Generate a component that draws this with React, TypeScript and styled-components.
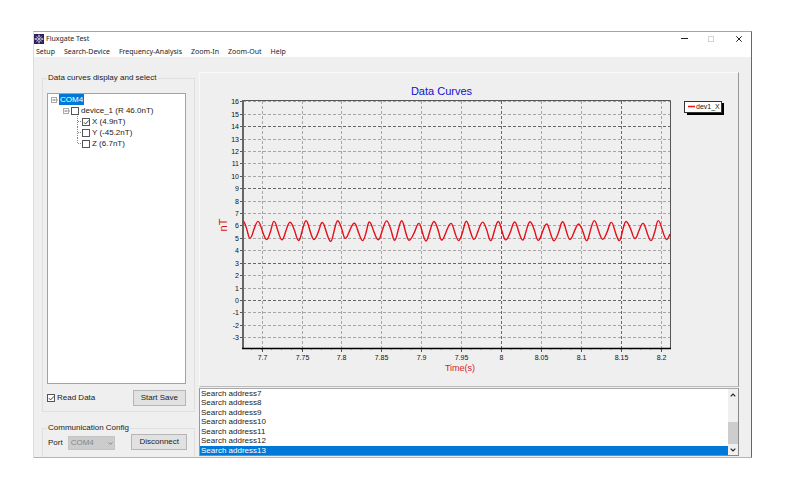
import React, { useState } from 'react';
import styled, { createGlobalStyle } from 'styled-components';

const sans = '"Liberation Sans", Arial, sans-serif';
const ui = '"Noto Sans", "Open Sans", sans-serif';

const GlobalStyle = createGlobalStyle`
  *, *::before, *::after { box-sizing: border-box; }
  body { margin: 0; background: #fff; color: #222; font: 8px/10px ${sans}; }
  button, input, select { font: inherit; color: inherit; margin: 0; }
`;

const AppWindow = styled.main`
  margin: 31px 48px 25px 33px;
  border: 1px solid;
  border-color: #a5a897 #666 #b4b4b4 #dcdcdc;
  background: #efefef;
`;

const TitleBar = styled.header`
  display: flex;
  align-items: center;
  gap: 2px;
  height: 14px;
  background: #fff;
`;

const Title = styled.h1`
  flex: 1;
  margin: 0;
  font: 400 7px/12px ${ui};
`;

const WindowButton = styled.button`
  display: grid;
  place-items: center;
  width: 25px;
  height: 14px;
  padding: 0;
  border: 0;
  background: none;
  color: #222;
  &:disabled { color: #d5d5cd; }
`;

const MenuBar = styled.nav`
  display: flex;
  gap: 9px;
  height: 11px;
  padding-left: 2px;
  background: #fff;
`;

const MenuItem = styled.button`
  padding: 0;
  border: 0;
  background: none;
  font: 7px/11px ${ui};
  white-space: nowrap;
`;

const Body = styled.div`
  display: grid;
  grid-template-columns: 153px minmax(0, 1fr);
  gap: 4px;
  padding: 15px 12px 0 8px;
`;

const Column = styled.div`
  display: flex;
  flex-direction: column;
  min-width: 0;
`;

const Group = styled.fieldset<{ $open?: boolean }>`
  min-width: 0;
  margin: ${p => (p.$open ? '11px 0 0' : '1px 0 0')};
  padding: ${p => (p.$open ? '0 7px 7px 4px' : '10px 8px 5px 4px')};
  border: 1px solid #dfdfdf;
  border-bottom-width: ${p => (p.$open ? 0 : '1px')};
`;

const Legend = styled.legend`
  padding: 0 1px;
  line-height: 10px;
  white-space: nowrap;
`;

const Tree = styled.ul`
  height: 291px;
  margin: 0 0 6px;
  padding: 0 0 0 3px;
  border: 1px solid #a2a2a2;
  background: #fff;
  list-style: none;
`;

const TreeRow = styled.li<{ $depth: number }>`
  display: flex;
  align-items: center;
  height: 11px;
  padding-left: ${p => [0, 12, 26][p.$depth]}px;
  white-space: nowrap;
`;

const NodeName = styled.span`
  height: 11px;
  padding: 0 1px;
  outline: 1px dotted #7a5a32;
  outline-offset: -1px;
  background: #0078d7;
  color: #fff;
  line-height: 11px;
`;

const CheckLabel = styled.label`
  display: flex;
  align-items: center;
  gap: 2px;
`;

const tick =
  "url(\"data:image/svg+xml,%3Csvg xmlns='http://www.w3.org/2000/svg' viewBox='0 0 8 8'%3E%3Cpath d='M1.5 4l1.8 1.8L6.8 2' fill='none' stroke='%23333'/%3E%3C/svg%3E\")";

const Check = styled.input.attrs({ type: 'checkbox' })`
  appearance: none;
  width: 8px;
  height: 8px;
  border: 1px solid #555;
  background: #fff;
  &:checked { background: #fff ${tick} center / 7px 7px no-repeat; }
`;

const Row = styled.div`
  display: flex;
  align-items: center;
  justify-content: space-between;
`;

const PushButton = styled.button`
  height: 16px;
  padding: 0 7px;
  border: 1px solid #b5b5b5;
  background: #e1e1e1;
  white-space: nowrap;
`;

const PortLabel = styled.label`
  display: flex;
  align-items: center;
  gap: 5px;
  padding: 3px 0 0 1px;
`;

const PortBox = styled.span`
  display: grid;
  align-items: center;
  color: #858585;
  > * { grid-area: 1 / 1; }
  > svg { justify-self: end; margin-right: 2px; }
`;

const PortSelect = styled.select`
  appearance: none;
  width: 47px;
  height: 14px;
  padding: 0 2px;
  border: 1px solid #c4c4c4;
  border-radius: 0;
  background: #cccccc;
  &:disabled { color: #858585; opacity: 1; }
`;

const ChartPanel = styled.section`
  border: 1px solid;
  border-color: #f8f8f8 #999 #bbb #f8f8f8;
`;

const Chart = styled.svg`
  display: block;
  width: 100%;
  height: auto;
  font-family: ${sans};
`;

const LogPanel = styled.section`
  display: flex;
  height: 68px;
  margin-top: 1px;
  border: 1px solid;
  border-color: #aaa #888 #888 #999;
  background: #fff;
`;

const LogList = styled.ul`
  display: flex;
  flex: 1;
  flex-direction: column;
  margin: 0;
  padding: 0;
  list-style: none;
`;

const LogItem = styled.li<{ $selected: boolean }>`
  flex: 1;
  padding-left: 1px;
  line-height: 9px;
  background: ${p => (p.$selected ? '#0078d7' : 'transparent')};
  color: ${p => (p.$selected ? '#fff' : '#222')};
`;

const ScrollTrack = styled.div`
  display: flex;
  flex-direction: column;
  width: 10px;
  background: #f0f0f0;
`;

const ScrollButton = styled.button`
  display: grid;
  place-items: center;
  height: 11px;
  padding: 0;
  border: 0;
  background: none;
`;

const ScrollThumb = styled.div`
  height: 22px;
  margin-top: auto;
  background: #cdcdcd;
`;

const Chevron = ({ up, size = 5 }: { up?: boolean; size?: number }) => (
  <svg width={size} height={size} viewBox="0 0 6 6" fill="none" stroke="currentColor" strokeWidth="1.2">
    <path d={up ? 'M.7 4.3L3 2l2.3 2.3' : 'M.7 1.7L3 4l2.3-2.3'} />
  </svg>
);

const AppIcon = () => (
  <svg width="10" height="10" viewBox="0 0 10 10">
    <rect width="10" height="10" fill="#2b2056" />
    <g fill="none" stroke="#d3cdf0">
      <circle cx="5" cy="5" r="2.3" strokeWidth=".9" />
      <path d="M5 .7v1.6M5 7.7v1.6M.7 5h1.6M7.7 5h1.6" strokeWidth="1.3" />
      <path d="M1.8 1.8l1 1M7.2 7.2l1 1M8.2 1.8l-1 1M2.8 7.2l-1 1" strokeWidth=".6" />
    </g>
    <circle cx="5" cy="5" r=".9" fill="#fff" />
  </svg>
);

const Expander = () => (
  <svg width="8" height="11" viewBox="0 0 8 11" fill="none" stroke="#888">
    <rect x=".5" y="3.5" width="5" height="5" stroke="#aaa" />
    <path d="M1.5 6h3" stroke="#444" strokeWidth=".8" />
    <path d="M6 6h2" strokeDasharray="1 1" />
  </svg>
);

const Branch = ({ last }: { last: boolean }) => (
  <svg width="5" height="11" viewBox="0 0 5 11" fill="none" stroke="#888" strokeDasharray="1 1">
    <path d={last ? 'M.5 0v6' : 'M.5 0v11'} />
    <path d="M1 5.5h4" />
  </svg>
);

const X0 = 243;
const X1 = 670;
const Y0 = 101;
const Y1 = 348;
const yAt = (v: number) => Math.round(300 - v * 12.42) + 0.5;
const xAt = (v: number) => Math.round(501 + (v - 8) * 798) + 0.5;
const yTicks = Array.from({ length: 20 }, (_, i) => 16 - i);
const xTicks = [7.7, 7.75, 7.8, 7.85, 7.9, 7.95, 8, 8.05, 8.1, 8.15, 8.2];
const minorTicks = Array.from({ length: 43 }, (_, i) => 251.5 + i * 9.98).filter(x => x < X1);

// Alternating troughs and crests of the measured field, in chart units.
const extrema: [number, number][] = [
  [250, 238.2], [258, 221.4], [266.7, 239.5], [274, 221.4], [282, 239.8], [290, 222.3], [298.7, 240.5],
  [306, 220.8], [314, 239.6], [322.3, 222.5], [330.7, 241.4], [337.7, 220.8], [345.3, 238.4], [354.3, 223.3],
  [362.7, 240.6], [369.3, 222], [378.3, 239.8], [386.7, 220.9], [394.7, 240.3], [401.7, 220.8], [409, 240.3],
  [419, 223.4], [426, 241], [434, 221.5], [441.7, 240], [451, 223.4], [458.7, 240.6], [466.3, 221.2],
  [474, 239.4], [482.7, 222.1], [490.7, 240.6], [498.3, 221.5], [505.7, 239.9], [514.7, 222], [522.7, 240],
  [530, 221.8], [538.3, 240.4], [546.7, 224], [554, 240.8], [562.7, 221.8], [570, 239.5], [578.7, 224],
  [586.7, 240.6], [594.3, 220.6], [602.7, 239.4], [611.3, 222.4], [619.3, 240.6], [626, 221.5], [635, 238.5],
  [643, 223.4], [651, 240.6], [658.3, 220.6], [666.7, 239.5],
];

const wave = extrema.reduce(
  (d, [x, y], i) => {
    const [px, py] = i ? extrema[i - 1] : [243, 221];
    const w = x - px;
    const m = (py + y) / 2;
    const mx = px + w * (i % 3 === 0 ? 0.56 : 0.48);
    return `${d} C${px + w * 0.2} ${py} ${mx - w * 0.17} ${m - (y - py) * 0.22} ${mx} ${m} S${x - w * 0.2} ${y} ${x} ${y}`;
  },
  'M243 221',
) + ' Q668 239 670 234';

const DataChart = () => (
  <Chart viewBox="200 73 538 313" role="img" aria-label="Data Curves">
    <text x="441.5" y="95" textAnchor="middle" fontSize="11" fill="#1010d0">Data Curves</text>
    <g strokeDasharray="3 2">
      {yTicks.map(v => (
        <path key={v} d={`M${X0} ${yAt(v)}H${X1}`} stroke={[14, 9, 3, 0].includes(v) ? '#666' : '#a6a6a6'} />
      ))}
      {xTicks.map(v => (
        <path key={v} d={`M${xAt(v)} ${Y0}V${Y1}`} stroke={v === 8 || v === 8.15 ? '#666' : '#a6a6a6'} />
      ))}
    </g>
    <g stroke="#555">
      {yTicks.map(v => <path key={v} d={`M240 ${yAt(v)}H${X0}`} />)}
      {xTicks.map(v => <path key={v} d={`M${xAt(v)} ${Y1}v4`} />)}
      {minorTicks.map(x => <path key={x} d={`M${x} ${Y1}v2`} stroke="#999" />)}
      <path d={`M${X0} 100.5H670.5V${Y1}`} fill="none" />
    </g>
    <path d={`M${X0} 100V349`} stroke="#666" strokeWidth="2" />
    <path d={`M242 348.5H671`} stroke="#000" strokeWidth="1.4" />
    <path d={wave} fill="none" stroke="#e60c18" strokeWidth="1.4" strokeLinejoin="round" />
    <g fontSize="7" fill="#111">
      {yTicks.map(v => <text key={v} x="239" y={yAt(v) + 2.5} textAnchor="end">{v}</text>)}
      {xTicks.map(v => <text key={v} x={xAt(v)} y="359.5" textAnchor="middle">{v}</text>)}
    </g>
    <text x="460" y="371" textAnchor="middle" fontSize="9" fill="#cf2430">Time(s)</text>
    <text transform="translate(227 225) rotate(-90)" textAnchor="middle" fontSize="11" fill="#d51522">nT</text>
    <rect x="687" y="103" width="37" height="12" fill="#000" />
    <rect x="684.5" y="101.5" width="37" height="11" fill="#fff" stroke="#333" />
    <path d="M688 106.5h7" stroke="#f01010" strokeWidth="1.5" />
    <text x="696" y="109" fontSize="7" fill="#222">dev1_X</text>
  </Chart>
);

const menus = ['Setup', 'Search-Device', 'Frequency-Analysis', 'Zoom-In', 'Zoom-Out', 'Help'];
const axes = [
  { label: 'X (4.9nT)', on: true },
  { label: 'Y (-45.2nT)', on: false },
  { label: 'Z (6.7nT)', on: false },
];
const addresses = [7, 8, 9, 10, 11, 12, 13];

export default function App() {
  const [selected, setSelected] = useState(13);
  return (
    <>
      <GlobalStyle />
      <AppWindow>
        <TitleBar>
          <AppIcon />
          <Title>Fluxgate Test</Title>
          <WindowButton aria-label="Minimize">
            <svg width="8" height="8" stroke="currentColor"><path d="M0 3.5h7" /></svg>
          </WindowButton>
          <WindowButton aria-label="Maximize" disabled>
            <svg width="7" height="7" stroke="currentColor" fill="none"><rect x=".5" y=".5" width="5" height="5" /></svg>
          </WindowButton>
          <WindowButton aria-label="Close">
            <svg width="6" height="6" viewBox="0 0 6 6" stroke="currentColor"><path d="M.3 .3l5.4 5.4M5.7 .3L.3 5.7" /></svg>
          </WindowButton>
        </TitleBar>
        <MenuBar>{menus.map(m => <MenuItem key={m}>{m}</MenuItem>)}</MenuBar>
        <Body>
          <Column>
            <Group>
              <Legend>Data curves display and select</Legend>
              <Tree>
                <TreeRow $depth={0}><Expander /><NodeName>COM4</NodeName></TreeRow>
                <TreeRow $depth={1}>
                  <Expander />
                  <CheckLabel><Check />device_1 (R 46.0nT)</CheckLabel>
                </TreeRow>
                {axes.map((a, i) => (
                  <TreeRow key={a.label} $depth={2}>
                    <Branch last={i === axes.length - 1} />
                    <CheckLabel><Check defaultChecked={a.on} />{a.label}</CheckLabel>
                  </TreeRow>
                ))}
              </Tree>
              <Row>
                <CheckLabel><Check defaultChecked />Read Data</CheckLabel>
                <PushButton>Start Save</PushButton>
              </Row>
            </Group>
            <Group $open>
              <Legend>Communication Config</Legend>
              <Row>
                <PortLabel>
                  Port
                  <PortBox>
                    <PortSelect disabled defaultValue="COM4"><option>COM4</option></PortSelect>
                    <Chevron />
                  </PortBox>
                </PortLabel>
                <PushButton>Disconnect</PushButton>
              </Row>
            </Group>
          </Column>
          <Column>
            <ChartPanel><DataChart /></ChartPanel>
            <LogPanel>
              <LogList role="listbox" aria-label="Search log">
                {addresses.map(n => (
                  <LogItem key={n} role="option" aria-selected={n === selected} $selected={n === selected} onClick={() => setSelected(n)}>
                    Search address{n}
                  </LogItem>
                ))}
              </LogList>
              <ScrollTrack>
                <ScrollButton aria-label="Scroll up"><Chevron up size={6} /></ScrollButton>
                <ScrollThumb />
                <ScrollButton aria-label="Scroll down"><Chevron size={6} /></ScrollButton>
              </ScrollTrack>
            </LogPanel>
          </Column>
        </Body>
      </AppWindow>
    </>
  );
}
